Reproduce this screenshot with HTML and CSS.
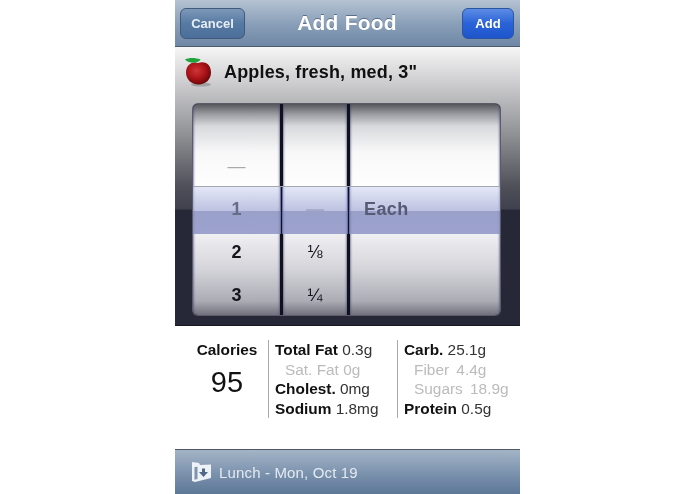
FILE: index.html
```html
<!DOCTYPE html>
<html lang="en">
<head>
  <meta charset="UTF-8" />
  <title>Add Food</title>
  <link rel="stylesheet" href="styles.css">
</head>
<body>
  <div class="phone">
    <header class="navbar">
      <button class="nav-btn cancel">Cancel</button>
      <h1>Add Food</h1>
      <button class="nav-btn add">Add</button>
    </header>

    <section class="picker-area">
      <div class="food-title">
        <svg class="apple" width="30" height="30" viewBox="0 0 30 30">
          <defs>
            <radialGradient id="appleRed" cx="0.42" cy="0.38" r="0.68">
              <stop offset="0" stop-color="#cf3438"/>
              <stop offset="0.55" stop-color="#a81216"/>
              <stop offset="1" stop-color="#5a0608"/>
            </radialGradient>
          </defs>
          <ellipse cx="17" cy="27.500" rx="10" ry="2" fill="#777" opacity="0.5"/>
          <path d="M14 6c5-2 13-.5 13 9.500 0 7-5.500 12-12.500 12S2 22.500 2 15.500C2 7 9 4 14 6z" fill="url(#appleRed)"/>
          <path d="M1 2.500C5 .5 11 .5 16.500 2.500 15 6.500 5 7 1 2.500z" fill="#1fa33a"/>
        </svg>
        <span>Apples, fresh, med, 3"</span>
      </div>

      <div class="picker">
        <div class="wheel wheel-a">
          <div class="row dash">—</div>
          <div class="row dim">1</div>
          <div class="row">2</div>
          <div class="row">3</div>
        </div>
        <div class="wheel wheel-b">
          <div class="row"></div>
          <div class="row dim faint">—</div>
          <div class="row frac">⅛</div>
          <div class="row frac">¼</div>
        </div>
        <div class="wheel wheel-c">
          <div class="row"></div>
          <div class="row dim unit">Each</div>
        </div>
        <div class="band">
          <div class="band-cell wheel-a"></div>
          <div class="band-cell wheel-b"></div>
          <div class="band-cell wheel-c"></div>
        </div>
      </div>
    </section>

    <section class="nutrition">
      <div class="calories">
        <div class="cal-label">Calories</div>
        <div class="cal-value">95</div>
      </div>
      <div class="facts first">
        <div><b>Total Fat</b> 0.3g</div>
        <div class="sub">Sat. Fat 0g</div>
        <div><b>Cholest.</b> 0mg</div>
        <div><b>Sodium</b> 1.8mg</div>
      </div>
      <div class="facts">
        <div><b>Carb.</b> 25.1g</div>
        <div class="sub wide">Fiber 4.4g</div>
        <div class="sub wide">Sugars 18.9g</div>
        <div><b>Protein</b> 0.5g</div>
      </div>
    </section>

    <footer class="meal-bar">
      <svg width="22" height="22" viewBox="0 0 22 22">
        <path d="M1 1l7 1 1 2 11-.5V17L4 21l-3-1z" fill="#eef1f5"/>
        <path d="M3.500 6l3-.3V18l-3 .8z" fill="#7f94ad"/>
        <path d="M11 7.500h3v3.500h3l-4.500 5L8 11h3z" fill="#52688a"/>
      </svg>
      <span>Lunch - Mon, Oct 19</span>
    </footer>
  </div>
</body>
</html>
```

FILE: styles.css
```css
body {
  margin: 0;
  background: #fff;
  font-family: 'Liberation Sans', Arial, sans-serif;
}
.phone {
  width: 345px;
  height: 494px;
  margin: 0 auto;
  display: flex;
  flex-direction: column;
  overflow: hidden;
  filter: blur(0.5px);
}

.navbar {
  height: 47px;
  box-sizing: border-box;
  padding: 0 6px 0 5px;
  display: grid;
  grid-template-columns: 1fr auto 1fr;
  align-items: center;
  background: linear-gradient(to bottom, #b5c3d3, #8ba0b9 50%, #6e87a5);
  border-bottom: 1px solid #4b5a6e;
}
.navbar h1 {
  margin: 0;
  font-size: 21px;
  font-weight: bold;
  letter-spacing: 0.2px;
  color: #fff;
  text-shadow: 0 -1px 0 #5b6f88;
}
.nav-btn {
  height: 31px;
  padding: 0;
  border: 1px solid #3f5a7c;
  border-radius: 6px;
  color: #e8eef5;
  font: bold 13px 'Liberation Sans', Arial, sans-serif;
}
.cancel {
  width: 65px;
  background: linear-gradient(to bottom, #7d98b8, #577aa3 50%, #4b6f9a);
}
.add {
  width: 52px;
  justify-self: end;
  border-color: #2a55a0;
  color: #fff;
  background: linear-gradient(to bottom, #5d8ce4, #2a63d8 50%, #1f55cb);
}

.picker-area {
  height: 279px;
  box-sizing: border-box;
  background: linear-gradient(to bottom, #f6f6f6 0, #d4d4d6 30px, #8d8e92 90px, #4e4f58 140px, #3f414e 162px, #262838 163px, #262838 100%);
  border-bottom: 1px solid #16181f;
}
.food-title {
  height: 50px;
  padding: 0 0 7px 9px;
  display: flex;
  align-items: center;
  gap: 10px;
  font-size: 18px;
  letter-spacing: 0.16px;
  font-weight: bold;
  color: #111;
}

.picker {
  width: 307px;
  height: 211px;
  margin-left: 18px;
  display: flex;
  gap: 3px;
  position: relative;
  background: #10121a;
  border-radius: 5px;
  overflow: hidden;
  box-shadow: 0 0 0 1px #5a5c6a;
}
.wheel {
  box-sizing: border-box;
  padding-top: 41px;
  background: linear-gradient(to bottom, #55565c 0, #9a9ba0 10px, #d8d9dc 22px, #f8f8f9 48px, #fff 85px, #f0f0f3 130px, #d4d4da 165px, #acacb5 197px, #70717c 211px);
  box-shadow: inset 3px 0 2px -2px rgba(70, 70, 130, 0.6), inset -3px 0 2px -2px rgba(70, 70, 130, 0.6);
}
.wheel-a { width: 87px; }
.wheel-b { width: 64px; }
.wheel-c { flex: 1; }
.row {
  height: 43px;
  display: flex;
  align-items: center;
  justify-content: center;
  font-size: 18px;
  font-weight: bold;
  color: #15151c;
}
.dash {
  color: #a9a9ab;
  font-weight: normal;
}
.frac {
  font-size: 18px;
  font-weight: normal;
}
.dim {
  position: relative;
  z-index: 1;
  color: #666c85;
}
.faint {
  color: #a3a9c8;
}
.unit {
  justify-content: flex-start;
  padding-left: 14px;
  letter-spacing: 0.4px;
  color: #565a74;
}
.band {
  position: absolute;
  left: 0;
  right: 0;
  top: 82px;
  height: 47px;
  display: flex;
  gap: 3px;
  border-top: 1px solid #a4a6b0;
}
.band-cell {
  background: linear-gradient(to bottom, rgba(205, 212, 240, 0.55) 0, rgba(165, 172, 215, 0.7) 50%, rgba(130, 138, 190, 0.8) 50%, rgba(135, 143, 196, 0.8) 100%);
  box-shadow: 1px 0 0 #6a70a8, -1px 0 0 #6a70a8;
}

.nutrition {
  height: 123px;
  box-sizing: border-box;
  padding-top: 14px;
  display: flex;
  background: #fff;
  font-size: 15.400px;
  line-height: 19.500px;
  color: #333;
}
.nutrition b {
  color: #111;
}
.calories {
  width: 93px;
  box-sizing: border-box;
  padding-left: 11px;
  text-align: center;
  color: #111;
  font-weight: bold;
}
.cal-value {
  margin-top: 13px;
  font-size: 29px;
  font-weight: normal;
}
.facts {
  height: 78px;
  box-sizing: border-box;
  padding-left: 6px;
  border-left: 1px solid #aaa;
  white-space: nowrap;
}
.facts.first {
  width: 129px;
}
.sub {
  padding-left: 10px;
  color: #bbb;
}
.wide {
  word-spacing: 3px;
}

.meal-bar {
  flex: 1;
  padding-left: 16px;
  display: flex;
  align-items: center;
  gap: 6px;
  background: linear-gradient(to bottom, #a4b4c7, #7e94af 50%, #5d7797);
  border-top: 1px solid #4f5763;
  font-size: 15px;
  letter-spacing: 0.15px;
  color: #e4eaf1;
}
```
